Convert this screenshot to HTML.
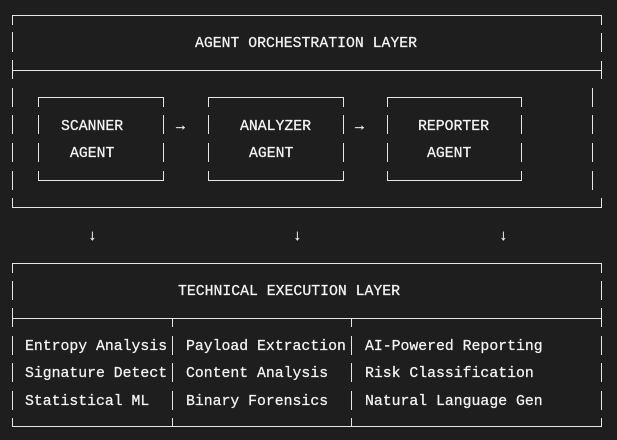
<!DOCTYPE html>
<html><head><meta charset="utf-8"><style>
html,body{margin:0;padding:0;background:#1e1e1e;width:617px;height:440px;overflow:hidden;position:relative}
.h{position:absolute;height:1px;background:#e6e6e6}
.v{position:absolute;width:1px;background:#e6e6e6}
.t{position:absolute;font-family:"Liberation Mono",monospace;font-size:14.8px;line-height:18px;color:#f4f4f4;white-space:pre;margin-top:1px;-webkit-text-stroke:0.25px #f4f4f4}
</style></head><body>
<!-- top box -->
<div class="h" style="left:12px;top:15px;width:590px"></div>
<div class="h" style="left:12px;top:70px;width:590px"></div>
<div class="h" style="left:12px;top:207px;width:590px"></div>
<div class="v" style="left:12px;top:15px;height:10px"></div>
<div class="v" style="left:12px;top:32px;height:20px"></div>
<div class="v" style="left:12px;top:60px;height:19px"></div>
<div class="v" style="left:12px;top:88px;height:19px"></div>
<div class="v" style="left:12px;top:115px;height:19px"></div>
<div class="v" style="left:12px;top:143px;height:19px"></div>
<div class="v" style="left:12px;top:171px;height:19px"></div>
<div class="v" style="left:12px;top:198px;height:10px"></div>
<div class="v" style="left:601px;top:15px;height:10px"></div>
<div class="v" style="left:601px;top:33px;height:19px"></div>
<div class="v" style="left:601px;top:61px;height:18px"></div>
<div class="v" style="left:592px;top:88px;height:19px"></div>
<div class="v" style="left:592px;top:115px;height:19px"></div>
<div class="v" style="left:592px;top:143px;height:19px"></div>
<div class="v" style="left:592px;top:171px;height:19px"></div>
<div class="v" style="left:601px;top:198px;height:10px"></div>
<div class="t" style="left:195px;top:34px">AGENT ORCHESTRATION LAYER</div>
<!-- inner boxes -->
<div class="h" style="left:38px;top:97px;width:126px"></div>
<div class="h" style="left:38px;top:180px;width:126px"></div>
<div class="v" style="left:38px;top:97px;height:10px"></div><div class="v" style="left:38px;top:115px;height:19px"></div><div class="v" style="left:38px;top:143px;height:19px"></div><div class="v" style="left:38px;top:171px;height:10px"></div>
<div class="v" style="left:163px;top:97px;height:10px"></div><div class="v" style="left:163px;top:115px;height:19px"></div><div class="v" style="left:163px;top:143px;height:19px"></div><div class="v" style="left:163px;top:171px;height:10px"></div>
<div class="t" style="left:61px;top:117px">SCANNER</div>
<div class="t" style="left:70px;top:144px">AGENT</div>
<div class="t" style="left:176px;top:117px">→</div>
<div class="h" style="left:208px;top:97px;width:136px"></div>
<div class="h" style="left:208px;top:180px;width:136px"></div>
<div class="v" style="left:208px;top:97px;height:10px"></div><div class="v" style="left:208px;top:115px;height:19px"></div><div class="v" style="left:208px;top:143px;height:19px"></div><div class="v" style="left:208px;top:171px;height:10px"></div>
<div class="v" style="left:343px;top:97px;height:10px"></div><div class="v" style="left:343px;top:115px;height:19px"></div><div class="v" style="left:343px;top:143px;height:19px"></div><div class="v" style="left:343px;top:171px;height:10px"></div>
<div class="t" style="left:240px;top:117px">ANALYZER</div>
<div class="t" style="left:249px;top:144px">AGENT</div>
<div class="t" style="left:355px;top:117px">→</div>
<div class="h" style="left:387px;top:97px;width:135px"></div>
<div class="h" style="left:387px;top:180px;width:135px"></div>
<div class="v" style="left:387px;top:97px;height:10px"></div><div class="v" style="left:387px;top:115px;height:19px"></div><div class="v" style="left:387px;top:143px;height:19px"></div><div class="v" style="left:387px;top:171px;height:10px"></div>
<div class="v" style="left:521px;top:97px;height:10px"></div><div class="v" style="left:521px;top:115px;height:19px"></div><div class="v" style="left:521px;top:143px;height:19px"></div><div class="v" style="left:521px;top:171px;height:10px"></div>
<div class="t" style="left:418px;top:117px">REPORTER</div>
<div class="t" style="left:427px;top:144px">AGENT</div>
<!-- down arrows -->
<div class="t" style="left:88px;top:227px">↓</div>
<div class="t" style="left:293px;top:227px">↓</div>
<div class="t" style="left:499px;top:227px">↓</div>
<!-- bottom box -->
<div class="h" style="left:12px;top:263px;width:590px"></div>
<div class="h" style="left:12px;top:318px;width:590px"></div>
<div class="h" style="left:12px;top:426px;width:590px"></div>
<div class="v" style="left:12px;top:263px;height:10px"></div>
<div class="v" style="left:12px;top:281px;height:19px"></div>
<div class="v" style="left:12px;top:308px;height:19px"></div>
<div class="v" style="left:12px;top:336px;height:19px"></div>
<div class="v" style="left:12px;top:363px;height:19px"></div>
<div class="v" style="left:12px;top:391px;height:19px"></div>
<div class="v" style="left:12px;top:418px;height:9px"></div>
<div class="v" style="left:601px;top:263px;height:10px"></div>
<div class="v" style="left:601px;top:281px;height:19px"></div>
<div class="v" style="left:601px;top:308px;height:19px"></div>
<div class="v" style="left:601px;top:336px;height:19px"></div>
<div class="v" style="left:601px;top:363px;height:19px"></div>
<div class="v" style="left:601px;top:391px;height:19px"></div>
<div class="v" style="left:601px;top:418px;height:9px"></div>
<div class="v" style="left:172px;top:318px;height:9px"></div><div class="v" style="left:172px;top:336px;height:19px"></div><div class="v" style="left:172px;top:363px;height:19px"></div><div class="v" style="left:172px;top:391px;height:19px"></div><div class="v" style="left:172px;top:418px;height:9px"></div>
<div class="v" style="left:351px;top:318px;height:9px"></div><div class="v" style="left:351px;top:336px;height:19px"></div><div class="v" style="left:351px;top:363px;height:19px"></div><div class="v" style="left:351px;top:391px;height:19px"></div><div class="v" style="left:351px;top:418px;height:9px"></div>
<div class="t" style="left:178px;top:282px">TECHNICAL EXECUTION LAYER</div>
<div class="t" style="left:25px;top:337px">Entropy Analysis</div>
<div class="t" style="left:25px;top:364px">Signature Detect</div>
<div class="t" style="left:25px;top:392px">Statistical ML</div>
<div class="t" style="left:186px;top:337px">Payload Extraction</div>
<div class="t" style="left:186px;top:364px">Content Analysis</div>
<div class="t" style="left:186px;top:392px">Binary Forensics</div>
<div class="t" style="left:365px;top:337px">AI-Powered Reporting</div>
<div class="t" style="left:365px;top:364px">Risk Classification</div>
<div class="t" style="left:365px;top:392px">Natural Language Gen</div>
</body></html>
